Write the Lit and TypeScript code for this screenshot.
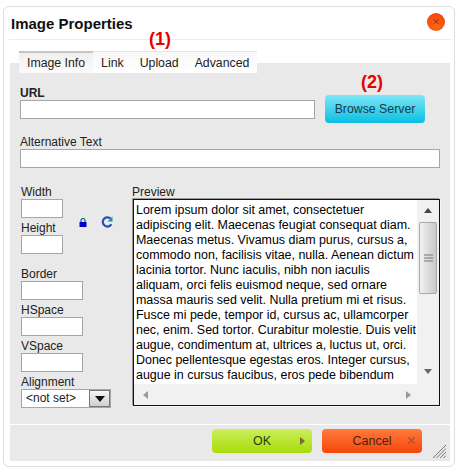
import { LitElement, html, css } from "lit";
import { customElement } from "lit/decorators.js";

const LOREM = [
  "Lorem ipsum dolor sit amet, consectetuer",
  "adipiscing elit. Maecenas feugiat consequat diam.",
  "Maecenas metus. Vivamus diam purus, cursus a,",
  "commodo non, facilisis vitae, nulla. Aenean dictum",
  "lacinia tortor. Nunc iaculis, nibh non iaculis",
  "aliquam, orci felis euismod neque, sed ornare",
  "massa mauris sed velit. Nulla pretium mi et risus.",
  "Fusce mi pede, tempor id, cursus ac, ullamcorper",
  "nec, enim. Sed tortor. Curabitur molestie. Duis velit",
  "augue, condimentum at, ultrices a, luctus ut, orci.",
  "Donec pellentesque egestas eros. Integer cursus,",
  "augue in cursus faucibus, eros pede bibendum",
];

@customElement("app-root")
export class AppRoot extends LitElement {
  static styles = css`
    :host {
      display: block;
      width: 462px;
      height: 471px;
      background: #fff;
      font-family: "Liberation Sans", Arial, sans-serif;
      font-size: 12px;
      color: #222;
      overflow: hidden;
    }
    .dialog {
      position: relative;
      box-sizing: border-box;
      width: 452px;
      height: 461px;
      margin: 6px 0 0 3px;
      padding: 0 4px 5px 6px;
      background: #fff;
      border: 1px solid #ddd;
      border-radius: 6px;
      display: flex;
      flex-direction: column;
    }
    .title {
      height: 33px;
      box-sizing: border-box;
      margin: 0 -1px 0 -1px;
      padding: 8px 0 0 2px;
      font-size: 15px;
      font-weight: bold;
      color: #111;
      border-bottom: 1px solid #ececec;
      flex: none;
    }
    .close {
      position: absolute;
      right: 9px;
      top: 6px;
      width: 18px;
      height: 18px;
      border-radius: 50%;
      background: radial-gradient(circle at 50% 70%, #ff6a1a, #ee3d05);
      color: #a8330c;
      font-size: 13px;
      line-height: 17px;
      text-align: center;
    }
    .tabs {
      display: flex;
      margin: 11px 0 0 9px;
      height: 21px;
      border-top: 1px solid #e4e4e4;
      background: linear-gradient(#f8f8f8, #fff);
      width: 238px;
      flex: none;
      position: relative;
      z-index: 1;
    }
    .tab {
      font-size: 12.3px;
      line-height: 22px;
      padding: 0 8px;
      color: #222;
      white-space: nowrap;
    }
    .tab.first {
      box-sizing: border-box;
      height: 22px;
      border-top: 2px solid #c4c4c4;
      margin-top: -1px;
      line-height: 21px;
      background: linear-gradient(#f0f0f0, #fbfbfb);
    }
    .panel {
      margin-top: -10px;
      height: 361px;
      box-sizing: border-box;
      background: #e9e9e9;
      padding: 22px 10px 0 10px;
      flex: none;
    }
    .footer {
      border-top: 1px solid #fff;
      background: #e9e9e9;
      flex: 1;
      display: flex;
      justify-content: flex-end;
      gap: 10px;
      padding: 4px 28px 0 0;
      position: relative;
    }
    .label {
      display: block;
      height: 15px;
      line-height: 17px;
      font-size: 12px;
    }
    .label.bold {
      font-weight: bold;
    }
    input {
      display: block;
      box-sizing: border-box;
      margin: 0;
      background: #fff;
      border: 1px solid #a6a6a6;
      height: 19px;
      padding: 0;
    }
    .url-row {
      display: flex;
      align-items: flex-end;
      gap: 10px;
    }
    .url-field {
      margin-bottom: 4px;
    }
    .url-field input {
      width: 295px;
    }
    .browse {
      width: 100px;
      height: 28px;
      box-sizing: border-box;
      border-radius: 4px;
      background: linear-gradient(#7ee6f7, #0bbfe2);
      color: #173a4a;
      font-size: 12.3px;
      line-height: 28px;
      text-align: center;
    }
    .alt {
      margin-top: 11px;
    }
    .alt input {
      width: 420px;
    }
    .columns {
      display: flex;
      margin-top: 16px;
      gap: 21px;
    }
    .left {
      width: 90px;
      margin-left: 1px;
      flex: none;
    }
    .field {
      margin-bottom: 2px;
    }
    .size-row {
      position: relative;
      margin-bottom: 12px;
    }
    .size-row input {
      width: 42px;
    }
    .short input {
      width: 62px;
    }
    .ratio {
      position: absolute;
      left: 58px;
      top: 32px;
      display: flex;
      gap: 14px;
      align-items: center;
    }
    .select {
      display: flex;
      box-sizing: border-box;
      width: 90px;
      height: 19px;
      background: #fff;
      border: 1px solid #a6a6a6;
      font-size: 12px;
      line-height: 17px;
      padding-left: 4px;
      justify-content: space-between;
    }
    .select .arrow {
      width: 21px;
      background: linear-gradient(#f6f6f6, #cfcfcf);
      border: 1px solid #777;
      box-sizing: border-box;
      display: flex;
      align-items: center;
      justify-content: center;
    }
    .right {
      flex: 1;
    }
    .preview {
      box-sizing: border-box;
      height: 207px;
      margin-left: 1px;
      background: #fff;
      border: 1px solid #111;
      box-shadow: -1px -1px 0 #999, 1px 1px 0 #f8f8f8;
      display: grid;
      grid-template-columns: 1fr 22px;
      grid-template-rows: 1fr 21px;
      min-height: 0;
    }
    .text {
      overflow: hidden;
      padding: 3px 0 0 2px;
      font-size: 12.45px;
      line-height: 15px;
      color: #000;
      min-height: 0;
      white-space: nowrap;
    }
    .vbar {
      background: #f1f1f1;
      display: flex;
      flex-direction: column;
      align-items: center;
      grid-row: 1;
      grid-column: 2;
      min-height: 0;
    }
    .up {
      margin-top: 8px;
      flex: none;
    }
    .down {
      margin-top: auto;
      margin-bottom: 9px;
      flex: none;
    }
    .thumb {
      box-sizing: border-box;
      width: 18px;
      height: 72px;
      margin-top: 8px;
      border: 1px solid #a9a9a9;
      border-radius: 2px;
      background: linear-gradient(90deg, #f2f2f2, #c8c8c8);
      display: flex;
      align-items: center;
      justify-content: center;
      flex: none;
    }
    .hbar {
      background: #f1f1f1;
      display: flex;
      justify-content: space-between;
      align-items: center;
      padding: 0 6px 0 9px;
    }
    .corner {
      background: #f1f1f1;
    }
    .btn {
      width: 100px;
      height: 24px;
      border-radius: 4px;
      position: relative;
      text-align: center;
      font-size: 12.5px;
      line-height: 24px;
      color: #2b3a10;
    }
    .ok {
      background: linear-gradient(#cbee5c, #a8dc0a);
    }
    .cancel {
      background: linear-gradient(#ff7a3c, #f6470a);
      color: #4d2010;
    }
    .btn .mark {
      position: absolute;
      right: 7px;
      top: 8px;
      display: block;
    }
    .grip {
      position: absolute;
      right: 4px;
      bottom: 3px;
    }
    .note {
      position: absolute;
      color: #e60000;
      font-size: 18px;
      font-weight: bold;
      line-height: 18px;
    }
    .note.one {
      left: 145px;
      top: 23px;
    }
    .note.two {
      left: 357px;
      top: 66px;
    }
  `;

  render() {
    return html`
      <div class="dialog">
        <div class="title">Image Properties</div>
        <div class="close">×</div>
        <div class="tabs">
          <div class="tab first">Image Info</div>
          <div class="tab">Link</div>
          <div class="tab">Upload</div>
          <div class="tab">Advanced</div>
        </div>
        <div class="panel">
          <div class="url-row">
            <div class="url-field">
              <label class="label bold">URL</label>
              <input type="text" />
            </div>
            <div class="browse">Browse Server</div>
          </div>
          <div class="alt">
            <label class="label">Alternative Text</label>
            <input type="text" />
          </div>
          <div class="columns">
            <div class="left">
              <div class="size-row">
                <div class="field">
                  <label class="label">Width</label>
                  <input type="text" />
                </div>
                <label class="label">Height</label>
                <input type="text" />
                <div class="ratio">
                  <svg width="8" height="9" viewBox="0 0 8 9">
                    <path d="M2 4V2.5a2 2 0 0 1 4 0V4" fill="none" stroke="#0b5f8c" stroke-width="1.2" />
                    <rect x="0.5" y="4" width="7" height="5" fill="#0000c8" />
                  </svg>
                  <svg width="12" height="12" viewBox="0 0 12 12">
                    <path d="M10.4 8.2A4.6 4.6 0 1 1 9.6 2.6" fill="none" stroke="#2c4fb0" stroke-width="2.2" />
                    <path d="M11.5 0.5V5.5H6.5Z" fill="#1f8fc4" />
                  </svg>
                </div>
              </div>
              <div class="short field">
                <label class="label">Border</label>
                <input type="text" />
              </div>
              <div class="short field">
                <label class="label">HSpace</label>
                <input type="text" />
              </div>
              <div class="short field">
                <label class="label">VSpace</label>
                <input type="text" />
              </div>
              <label class="label">Alignment</label>
              <div class="select">
                <span>&lt;not set&gt;</span>
                <span class="arrow">
                  <svg width="10" height="6" viewBox="0 0 10 6"><path d="M0 0H10L5 6Z" fill="#111" /></svg>
                </span>
              </div>
            </div>
            <div class="right">
              <label class="label">Preview</label>
              <div class="preview">
                <div class="text">${LOREM.map((line) => html`<div>${line}</div>`)}</div>
                <div class="vbar">
                  <svg class="up" width="10" height="6" viewBox="0 0 10 6"><path d="M5 0L9 5H1Z" fill="#444" /></svg>
                  <div class="thumb">
                    <svg width="9" height="8" viewBox="0 0 9 8">
                      <path d="M0 1H9M0 4H9M0 7H9" stroke="#777" fill="none" />
                    </svg>
                  </div>
                  <svg class="down" width="10" height="6" viewBox="0 0 10 6"><path d="M1 0H9L5 5Z" fill="#666" /></svg>
                </div>
                <div class="hbar">
                  <svg width="6" height="10" viewBox="0 0 6 10"><path d="M5 1V9L0 5Z" fill="#999" /></svg>
                  <svg width="6" height="10" viewBox="0 0 6 10"><path d="M1 1V9L6 5Z" fill="#999" /></svg>
                </div>
                <div class="corner"></div>
              </div>
            </div>
          </div>
        </div>
        <div class="footer">
          <div class="btn ok">
            OK
            <svg class="mark" width="5" height="8" viewBox="0 0 5 8"><path d="M0 0L5 4L0 8Z" fill="#7a6a30" /></svg>
          </div>
          <div class="btn cancel">
            Cancel
            <svg class="mark" width="7" height="7" viewBox="0 0 7 7">
              <path d="M0.5 0.5L6.5 6.5M6.5 0.5L0.5 6.5" stroke="#a8552e" stroke-width="1.4" fill="none" />
            </svg>
          </div>
          <svg class="grip" width="13" height="13" viewBox="0 0 13 13">
            <path d="M0 13L13 0M3.5 13L13 3.5M7 13L13 7M10.5 13L13 10.5" stroke="#777" fill="none" />
          </svg>
        </div>
        <div class="note one">(1)</div>
        <div class="note two">(2)</div>
      </div>
    `;
  }
}
